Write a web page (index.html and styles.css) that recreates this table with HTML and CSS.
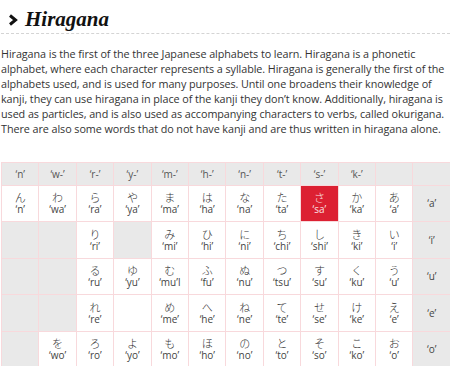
FILE: index.html
```html
<!DOCTYPE html>
<html>
<head>
<meta charset="utf-8">
<link rel="stylesheet" href="styles.css">
</head>
<body>
<h2 class="title">
  <svg class="chev" width="10" height="12" viewBox="0 0 10 12"><polyline points="2,1.5 7.5,6 2,10.5" fill="none" stroke="#111" stroke-width="3" stroke-linejoin="miter"/></svg>
  <span>Hiragana</span>
</h2>
<p class="intro">Hiragana is the first of the three Japanese alphabets to learn. Hiragana is a phonetic alphabet, where each character represents a syllable. Hiragana is generally the first of the alphabets used, and is used for many purposes. Until one broadens their knowledge of kanji, they can use hiragana in place of the kanji they don’t know. Additionally, hiragana is used as particles, and is also used as accompanying characters to verbs, called okurigana. There are also some words that do not have kanji and are thus written in hiragana alone.</p>
<table class="kana">
  <tr class="head">
    <th>‘n’</th><th>‘w-’</th><th>‘r-’</th><th>‘y-’</th><th>‘m-’</th><th>‘h-’</th><th>‘n-’</th><th>‘t-’</th><th>‘s-’</th><th>‘k-’</th><th></th><th></th>
  </tr>
  <tr>
    <td><span class="k">ん</span>‘n’</td><td><span class="k">わ</span>‘wa’</td><td><span class="k">ら</span>‘ra’</td><td><span class="k">や</span>‘ya’</td><td><span class="k">ま</span>‘ma’</td><td><span class="k">は</span>‘ha’</td><td><span class="k">な</span>‘na’</td><td><span class="k">た</span>‘ta’</td><td class="hl"><span class="k">さ</span>‘sa’</td><td><span class="k">か</span>‘ka’</td><td><span class="k">あ</span>‘a’</td><td class="lab">‘a’</td>
  </tr>
  <tr>
    <td class="g"></td><td class="g"></td><td><span class="k">り</span>‘ri’</td><td class="g"></td><td><span class="k">み</span>‘mi’</td><td><span class="k">ひ</span>‘hi’</td><td><span class="k">に</span>‘ni’</td><td><span class="k">ち</span>‘chi’</td><td><span class="k">し</span>‘shi’</td><td><span class="k">き</span>‘ki’</td><td><span class="k">い</span>‘i’</td><td class="lab">‘i’</td>
  </tr>
  <tr>
    <td class="g"></td><td class="g"></td><td><span class="k">る</span>‘ru’</td><td><span class="k">ゆ</span>‘yu’</td><td><span class="k">む</span>‘mu’l</td><td><span class="k">ふ</span>‘fu’</td><td><span class="k">ぬ</span>‘nu’</td><td><span class="k">つ</span>‘tsu’</td><td><span class="k">す</span>‘su’</td><td><span class="k">く</span>‘ku’</td><td><span class="k">う</span>‘u’</td><td class="lab">‘u’</td>
  </tr>
  <tr>
    <td class="g"></td><td class="g"></td><td><span class="k">れ</span>‘re’</td><td></td><td><span class="k">め</span>‘me’</td><td><span class="k">へ</span>‘he’</td><td><span class="k">ね</span>‘ne’</td><td><span class="k">て</span>‘te’</td><td><span class="k">せ</span>‘se’</td><td><span class="k">け</span>‘ke’</td><td><span class="k">え</span>‘e’</td><td class="lab">‘e’</td>
  </tr>
  <tr>
    <td class="g"></td><td><span class="k">を</span>‘wo’</td><td><span class="k">ろ</span>‘ro’</td><td><span class="k">よ</span>‘yo’</td><td><span class="k">も</span>‘mo’</td><td><span class="k">ほ</span>‘ho’</td><td><span class="k">の</span>‘no’</td><td><span class="k">と</span>‘to’</td><td><span class="k">そ</span>‘so’</td><td><span class="k">こ</span>‘ko’</td><td><span class="k">お</span>‘o’</td><td class="lab">‘o’</td>
  </tr>
</table>
</body>
</html>
```
FILE: styles.css
```css
html, body {
  margin: 0;
  padding: 0;
  background: #fff;
}
body {
  padding-left: 1px;
  font-family: "Open Sans", "Noto Sans CJK JP", sans-serif;
  color: #333;
}
.title {
  margin: 0;
  height: 34px;
  box-sizing: border-box;
  padding: 5px 0 0 7px;
  border-bottom: 1px dashed #d4d4d4;
  display: flex;
  align-items: center;
  gap: 7px;
  font-family: "Liberation Serif", serif;
  font-style: italic;
  font-weight: bold;
  font-size: 21px;
  color: #111;
}
.chev {
  display: block;
  margin-top: 1px;
}
.intro {
  margin: 12px 0 0 0;
  font-size: 10.8px;
  letter-spacing: -0.07px;
  line-height: 15px;
  color: #333;
}
.kana {
  margin-top: 26px;
  width: 450px;
  table-layout: fixed;
  border-collapse: collapse;
  font-family: "Open Sans", "Noto Sans CJK JP", sans-serif;
  font-size: 10px;
  color: #444;
}
.kana th, .kana td {
  border: 1px solid #f8d9dc;
  text-align: center;
  padding: 0;
  font-weight: normal;
}
.kana th {
  background: #e9e9e9;
  height: 21.5px;
  color: #555;
}
.kana td {
  height: 35.5px;
  line-height: 12px;
  vertical-align: middle;
}
.kana .k {
  display: block;
  font-family: "Noto Sans CJK JP", sans-serif;
  font-weight: 300;
  font-size: 11px;
  line-height: 12px;
  color: #333;
}
.kana td.g, .kana td.lab {
  background: #e9e9e9;
}
.kana td.lab {
  color: #444;
}
.kana td.hl {
  background: #dc2032;
  color: #fbe2e4;
}
.kana td.hl .k {
  color: #fbe2e4;
}
```
